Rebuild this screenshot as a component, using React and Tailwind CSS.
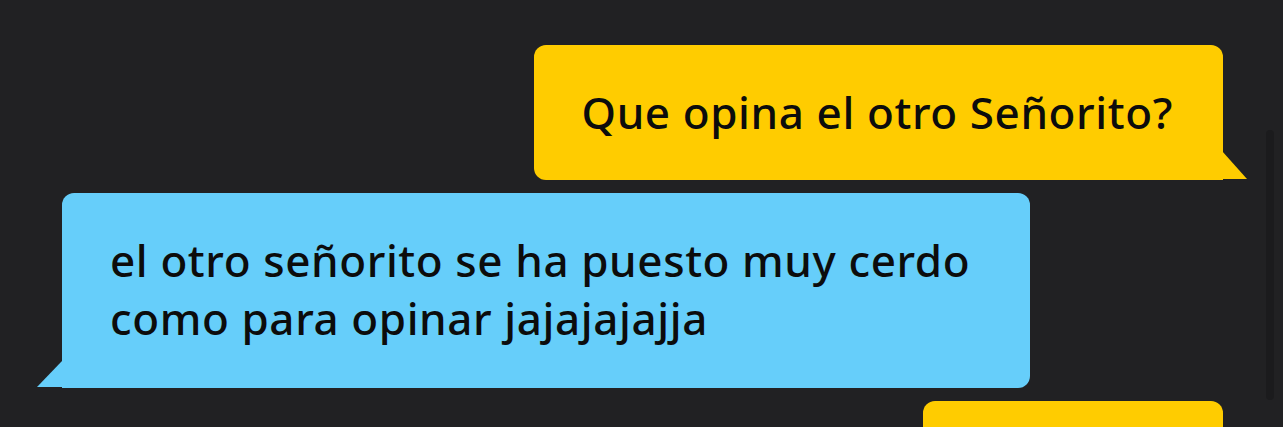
import React from "react";

const font = { fontFamily: '"Noto Sans", "Open Sans", sans-serif' };

function YellowBubble({ children }) {
  return (
    <div className="relative self-end mr-[43px]">
      <div className="bg-[#ffcc00] rounded-[12px] rounded-br-none pl-[48px] pr-[50px] pt-[38px] pb-[39px] text-[44px] leading-[58px] font-medium text-[#0c0c0c] tracking-[0.6px]">
        {children}
      </div>
      <svg
        className="absolute right-[-25px] bottom-0"
        width="26"
        height="29"
        viewBox="0 0 26 29"
      >
        <polygon points="0,0 25,28 0,28" fill="#ffcc00" />
      </svg>
    </div>
  );
}

function BlueBubble({ children }) {
  return (
    <div className="relative self-start ml-[62px]">
      <div className="bg-[#66cefa] rounded-[12px] rounded-bl-none pl-[48px] pr-[60px] pt-[38px] pb-[41px] text-[44px] leading-[58px] font-medium text-[#0c0c0c] tracking-[0.6px]">
        {children}
      </div>
      <svg
        className="absolute left-[-25px] bottom-0"
        width="26"
        height="27"
        viewBox="0 0 26 27"
      >
        <polygon points="25,0 0,26 25,26" fill="#66cefa" />
      </svg>
    </div>
  );
}

export default function App() {
  return (
    <div className="w-[1283px] h-[427px] overflow-hidden bg-[#212123] flex" style={font}>
      <div className="flex-1 flex flex-col pt-[45px] gap-[13px]">
        <YellowBubble>Que opina el otro Señorito?</YellowBubble>
        <BlueBubble>
          el otro señorito se ha puesto muy cerdo
          <br />
          como para opinar jajajajajja
        </BlueBubble>
        <div className="self-end mr-[43px] w-[300px] h-[80px] bg-[#ffcc00] rounded-[12px] shrink-0" />
      </div>
      <div className="w-[17px] pt-[130px] pb-[27px] pr-[9px] flex">
        <div className="w-[8px] flex-1 rounded-full bg-[#1b1b1d]" />
      </div>
    </div>
  );
}
